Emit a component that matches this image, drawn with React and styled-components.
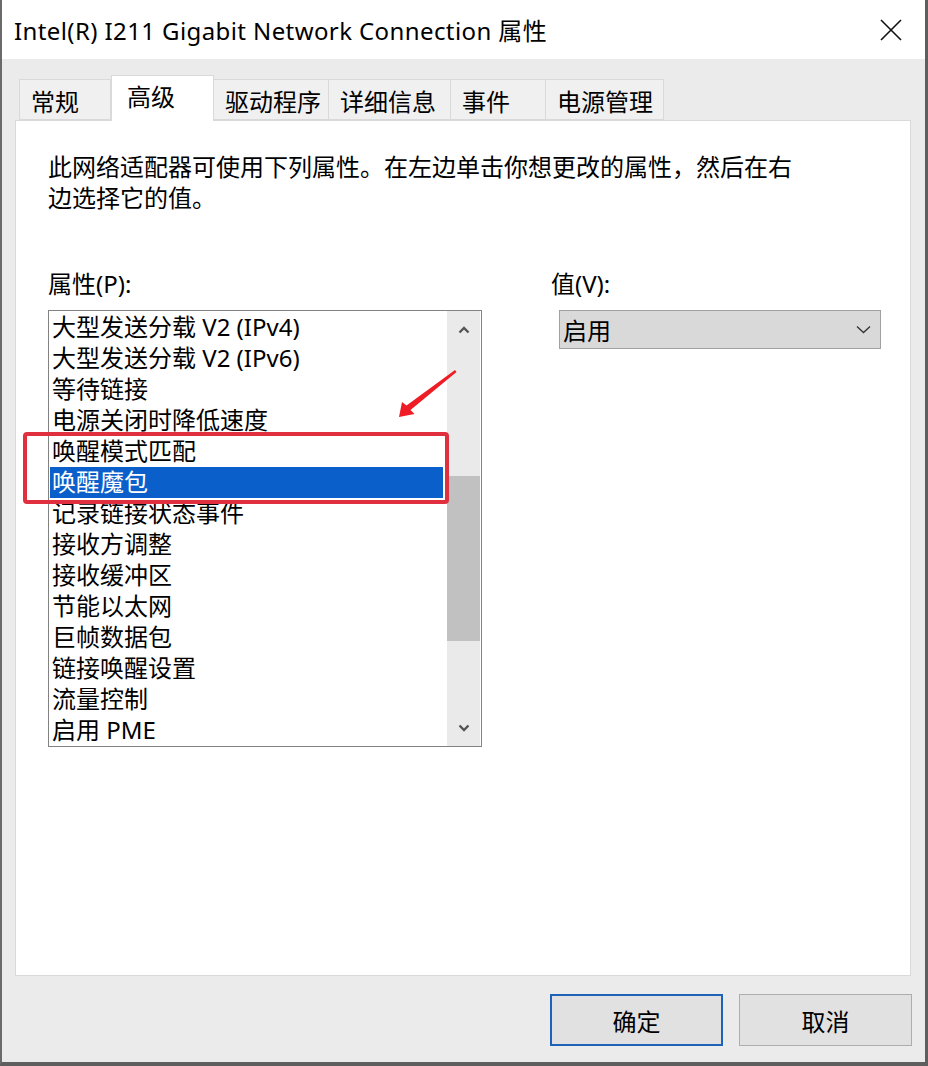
import React from 'react';
import styled, { createGlobalStyle } from 'styled-components';

const GlobalStyle = createGlobalStyle`
  html, body {
    margin: 0;
    padding: 0;
    background: #ffffff;
    overflow: hidden;
  }
  * {
    box-sizing: border-box;
  }
`;

const FONT = `"Segoe UI", "Noto Sans", "Noto Sans CJK SC", sans-serif`;

const tabs = [
  { label: '常规', width: 92 },
  { label: '高级', width: 103, active: true },
  { label: '驱动程序', width: 115 },
  { label: '详细信息', width: 122 },
  { label: '事件', width: 95 },
  { label: '电源管理', width: 118 },
];

const properties = [
  '大型发送分载 V2 (IPv4)',
  '大型发送分载 V2 (IPv6)',
  '等待链接',
  '电源关闭时降低速度',
  '唤醒模式匹配',
  '唤醒魔包',
  '记录链接状态事件',
  '接收方调整',
  '接收缓冲区',
  '节能以太网',
  '巨帧数据包',
  '链接唤醒设置',
  '流量控制',
  '启用 PME',
];

const App = () => {
  return (
    <>
      <GlobalStyle />
      <Window>
        <TitleBar>
          <Title>Intel(R) I211 Gigabit Network Connection 属性</Title>
          <CloseButton>
            <svg width="22" height="22" viewBox="0 0 22 22">
              <path d="M1 1 L21 21 M21 1 L1 21" stroke="#111" strokeWidth="1.6" fill="none" />
            </svg>
          </CloseButton>
        </TitleBar>

        <Body>
          <TabStrip>
            {tabs.map((t) => (
              <Tab key={t.label} $active={t.active} $w={t.width}>
                {t.label}
              </Tab>
            ))}
          </TabStrip>

          <Panel>
            <Description>
              此网络适配器可使用下列属性。在左边单击你想更改的属性，然后在右
              <br />
              边选择它的值。
            </Description>

            <Columns>
              <Column>
                <Label>属性(P):</Label>
                <ListBox>
                  <Items>
                    {properties.map((p) => (
                      <Item key={p} $selected={p === '唤醒魔包'}>
                        {p}
                      </Item>
                    ))}
                  </Items>
                  <ScrollBar>
                    <ArrowBtn>
                      <svg width="12" height="8" viewBox="0 0 12 8">
                        <path d="M1.5 6.5 L6 2 L10.5 6.5" stroke="#555" strokeWidth="2.4" fill="none" />
                      </svg>
                    </ArrowBtn>
                    <Track>
                      <Thumb />
                    </Track>
                    <ArrowBtn>
                      <svg width="12" height="8" viewBox="0 0 12 8">
                        <path d="M1.5 1.5 L6 6 L10.5 1.5" stroke="#555" strokeWidth="2.4" fill="none" />
                      </svg>
                    </ArrowBtn>
                  </ScrollBar>
                </ListBox>
              </Column>

              <ValueColumn>
                <Label>值(V):</Label>
                <Select>
                  <span>启用</span>
                  <svg width="15" height="9" viewBox="0 0 15 9">
                    <path d="M1 1.5 L7.5 7.5 L14 1.5" stroke="#333" strokeWidth="1.3" fill="none" />
                  </svg>
                </Select>
              </ValueColumn>
            </Columns>
          </Panel>

          <Footer>
            <Button $primary>确定</Button>
            <Button>取消</Button>
          </Footer>
        </Body>

        <Highlight />
        <Arrow width="70" height="60" viewBox="0 0 70 60">
          <path d="M2 50 L5 35 L9.5 38.5 L58 3 L59.5 5 L13.5 43 L17.5 47 Z" fill="#ee1c24" />
        </Arrow>
      </Window>
    </>
  );
};

const Window = styled.div`
  position: relative;
  width: 928px;
  height: 1066px;
  display: flex;
  flex-direction: column;
  border-left: 2px solid #6a6a6a;
  border-right: 3px solid #5e5e5e;
  border-bottom: 4px solid #5e5e5e;
  font-family: ${FONT};
  color: #000;
`;

const TitleBar = styled.div`
  height: 59px;
  flex: none;
  background: #ffffff;
  display: flex;
  align-items: center;
  justify-content: space-between;
  padding: 0 12px 0 12px;
`;

const Title = styled.div`
  font-size: 24px;
  letter-spacing: 0.4px;
`;

const CloseButton = styled.div`
  width: 40px;
  display: flex;
  justify-content: center;
  align-items: center;
  margin-right: 2px;
`;

const Body = styled.div`
  flex: 1;
  background: #ebebeb;
  display: flex;
  flex-direction: column;
  padding-top: 16px;
`;

const TabStrip = styled.div`
  display: flex;
  align-items: flex-end;
  height: 45px;
  padding-left: 17px;
  position: relative;
  z-index: 1;
`;

const Tab = styled.div`
  width: ${(p) => p.$w}px;
  height: ${(p) => (p.$active ? 46 : 41)}px;
  margin-bottom: ${(p) => (p.$active ? -1 : 0)}px;
  background: ${(p) => (p.$active ? '#ffffff' : '#f0f0f0')};
  border: 1px solid #d9d9d9;
  border-bottom: ${(p) => (p.$active ? 'none' : '1px solid #d9d9d9')};
  border-left: ${(p) => (p.$active ? '1px solid #d9d9d9' : 'none')};
  &:first-child {
    border-left: 1px solid #d9d9d9;
  }
  font-size: 24px;
  line-height: 1;
  padding: ${(p) => (p.$active ? '9px 0 0 15px' : '10px 0 0 11px')};
  white-space: nowrap;
`;

const Panel = styled.div`
  margin: 0 14px 0 13px;
  height: 856px;
  background: #ffffff;
  border: 1px solid #d9d9d9;
  padding: 30px 0 0 32px;
`;

const Description = styled.p`
  margin: 0;
  font-size: 24px;
  line-height: 31px;
`;

const Columns = styled.div`
  display: flex;
  margin-top: 55px;
`;

const Column = styled.div`
  width: 434px;
  display: flex;
  flex-direction: column;
`;

const ValueColumn = styled.div`
  margin-left: 69px;
  width: 330px;
  display: flex;
  flex-direction: column;
`;

const Label = styled.div`
  font-size: 24px;
  line-height: 31px;
  margin-bottom: 11px;
`;

const ListBox = styled.div`
  height: 437px;
  border: 1px solid #828282;
  display: flex;
  background: #ffffff;
`;

const Items = styled.div`
  flex: 1;
  padding: 1px 4px 0 1px;
  display: flex;
  flex-direction: column;
`;

const Item = styled.div`
  height: 31px;
  font-size: 24px;
  line-height: 30px;
  padding-left: 2px;
  white-space: nowrap;
  background: ${(p) => (p.$selected ? '#0b5fcb' : 'transparent')};
  color: ${(p) => (p.$selected ? '#ffffff' : '#000000')};
`;

const ScrollBar = styled.div`
  width: 33px;
  margin-right: 1px;
  background: #eaeaea;
  display: flex;
  flex-direction: column;
`;

const ArrowBtn = styled.div`
  height: 37px;
  flex: none;
  display: flex;
  align-items: center;
  justify-content: center;
`;

const Track = styled.div`
  flex: 1;
  display: flex;
  flex-direction: column;
  padding-top: 128px;
`;

const Thumb = styled.div`
  height: 165px;
  background: #c1c1c1;
`;

const Select = styled.div`
  margin-left: 8px;
  width: 322px;
  height: 39px;
  background: #d9d9d9;
  border: 1px solid #a0a0a0;
  display: flex;
  align-items: center;
  justify-content: space-between;
  padding: 0 9px 0 3px;
  font-size: 24px;
`;

const Footer = styled.div`
  display: flex;
  justify-content: flex-end;
  gap: 16px;
  padding: 18px 13px 0 0;
`;

const Button = styled.div`
  width: 173px;
  height: 52px;
  display: flex;
  align-items: center;
  justify-content: center;
  font-size: 24px;
  background: #e1e1e1;
  border: ${(p) => (p.$primary ? '2px solid #1f63b8' : '1px solid #adadad')};
`;

const Highlight = styled.div`
  position: absolute;
  left: 21px;
  top: 432px;
  width: 426px;
  height: 72px;
  border: 4px solid #e0303f;
  border-radius: 4px;
  pointer-events: none;
`;

const Arrow = styled.svg`
  position: absolute;
  left: 395px;
  top: 367px;
  pointer-events: none;
`;

export default App;
